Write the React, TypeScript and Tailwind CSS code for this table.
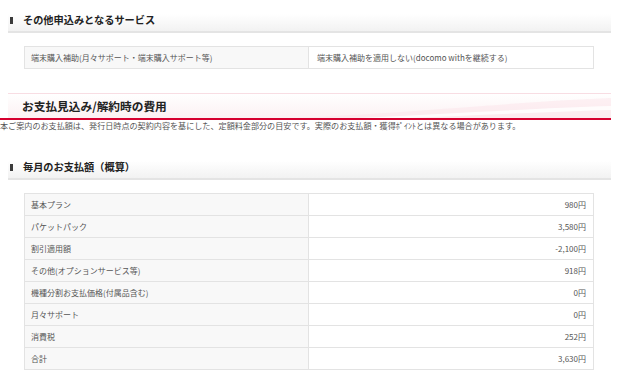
import React from "react";

const font = { fontFamily: '"Noto Sans CJK JP", "Noto Sans", sans-serif' };

function SectionHeader({ title }: { title: string }) {
  return (
    <div className="ml-2 h-[33px] box-border pt-[9px] pl-[2px] border-b-2 border-[#e4e4e4] bg-gradient-to-b from-white from-45% to-[#f2f2f2] flex items-center gap-[10px]">
      <span className="w-[3px] h-[7px] bg-[#3a3a3a] shrink-0" />
      <span className="text-[10.2px] font-bold text-[#222] leading-none">{title}</span>
    </div>
  );
}

const rows: [string, string][] = [
  ["基本プラン", "980円"],
  ["パケットパック", "3,580円"],
  ["割引適用額", "-2,100円"],
  ["その他(オプションサービス等)", "918円"],
  ["機種分割お支払価格(付属品含む)", "0円"],
  ["月々サポート", "0円"],
  ["消費税", "252円"],
  ["合計", "3,630円"],
];

export default function App() {
  return (
    <div className="w-[626px] h-[390px] bg-white overflow-hidden" style={font}>
      <div className="w-[611px]">
        <SectionHeader title="その他申込みとなるサービス" />

        <div className="mt-[13px] ml-[24px] w-[570px] border-t border-l border-r border-[#e3e3e3]">
          <div className="flex h-[22px] border-b border-[#e3e3e3] text-[8px] text-[#555]">
            <div className="w-[284px] border-r border-[#e3e3e3] bg-[#f8f8f8] flex items-center pl-[6px]">
              端末購入補助(月々サポート・端末購入サポート等)
            </div>
            <div className="flex-1 flex items-center pl-[8px]">
              端末購入補助を適用しない(docomo withを継続する)
            </div>
          </div>
        </div>

        <div className="mt-[24px] border-b-2 border-[#d6002f]">
          <div className="relative ml-2 h-[25px] border-t border-[#f8dde3] bg-gradient-to-b from-white to-[#fcf1f3] overflow-hidden flex items-center pl-[14px]">
            <svg className="absolute inset-0" width="603" height="25" viewBox="0 0 603 25" preserveAspectRatio="none">
              <path d="M260 25 C 400 20, 500 8, 603 4 L603 25 Z" fill="#fbe6eb" opacity="0.55" />
              <path d="M330 25 C 440 20, 530 14, 603 12 L603 16 C 530 18, 440 23, 370 25 Z" fill="#ffffff" opacity="0.8" />
            </svg>
            <span className="relative text-[11.7px] font-bold text-[#222] leading-none">お支払見込み/解約時の費用</span>
          </div>
        </div>
        <div className="mt-[1px] text-[8.1px] leading-[10px] text-[#555] whitespace-nowrap">
          本ご案内のお支払額は、発行日時点の契約内容を基にした、定額料金部分の目安です。実際のお支払額・獲得ﾎﾟｲﾝﾄとは異なる場合があります。
        </div>

        <div className="mt-[16px]">
          <SectionHeader title="毎月のお支払額（概算）" />
        </div>

        <div className="mt-[13px] ml-[24px] w-[570px] border-t border-l border-r border-[#e3e3e3]">
          {rows.map(([label, value]) => (
            <div key={label} className="flex h-[22px] border-b border-[#e3e3e3] text-[8px] text-[#555]">
              <div className="w-[284px] border-r border-[#e3e3e3] bg-[#f8f8f8] flex items-center pl-[6px]">
                {label}
              </div>
              <div className="flex-1 flex items-center justify-end pr-[7px]">{value}</div>
            </div>
          ))}
        </div>
      </div>
    </div>
  );
}
